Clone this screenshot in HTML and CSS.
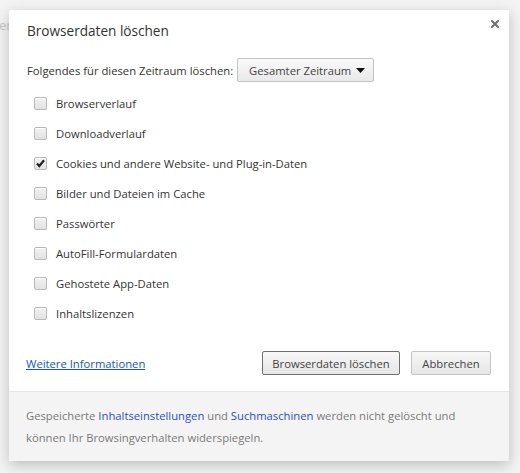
FILE: index.html
```html
<!DOCTYPE html>
<html lang="de">
<head>
<meta charset="utf-8">
<title>Browserdaten löschen</title>
<link rel="stylesheet" href="styles.css">
</head>
<body>
<div class="page-text">er</div>
<div class="dialog">
  <div class="main">
    <div class="head">
      <h1 class="title">Browserdaten löschen</h1>
      <svg class="close" width="8" height="8" viewBox="0 0 8 8"><path d="M1 1L7 7M7 1L1 7" stroke="#6f6f6f" stroke-width="2" stroke-linecap="square"/></svg>
    </div>
    <div class="range">
      <span class="range-label">Folgendes für diesen Zeitraum löschen:</span>
      <div class="select"><span>Gesamter Zeitraum</span><svg class="arrow" width="9" height="5" viewBox="0 0 9 5"><path d="M0 0H9L4.5 5Z" fill="#111"/></svg></div>
    </div>
    <ul class="options">
      <li class="opt"><span class="box"></span>Browserverlauf</li>
      <li class="opt"><span class="box"></span>Downloadverlauf</li>
      <li class="opt"><span class="box"><svg width="11" height="11" viewBox="0 0 11 11"><path d="M2 5.5L4.3 8L9 2.2" fill="none" stroke="#222" stroke-width="2.2"/></svg></span>Cookies und andere Website- und Plug-in-Daten</li>
      <li class="opt"><span class="box"></span>Bilder und Dateien im Cache</li>
      <li class="opt"><span class="box"></span>Passwörter</li>
      <li class="opt"><span class="box"></span>AutoFill-Formulardaten</li>
      <li class="opt"><span class="box"></span>Gehostete App-Daten</li>
      <li class="opt"><span class="box"></span>Inhaltslizenzen</li>
    </ul>
    <div class="actions">
      <a class="more" href="#">Weitere Informationen</a>
      <div class="buttons">
        <button class="btn btn-default">Browserdaten löschen</button>
        <button class="btn btn-cancel">Abbrechen</button>
      </div>
    </div>
  </div>
  <div class="footer">
    Gespeicherte <a href="#">Inhaltseinstellungen</a> und <a href="#">Suchmaschinen</a> werden nicht gelöscht und<br>können Ihr Browsingverhalten widerspiegeln.
  </div>
</div>
</body>
</html>
```
FILE: styles.css
```css
html, body {
  margin: 0;
  padding: 0;
}
body {
  width: 520px;
  height: 473px;
  background: #f3f3f3;
  font-family: "Open Sans", "Noto Sans", sans-serif;
  font-size: 11.25px;
  color: #333;
  position: relative;
  overflow: hidden;
}
.page-text {
  position: absolute;
  left: -1px;
  top: 16px;
  font-size: 13px;
  color: #c8c8c8;
}
.dialog {
  position: absolute;
  left: 9px;
  top: 10px;
  width: 500px;
  height: 451px;
  background: #fff;
  border-radius: 2px;
  box-shadow: 0 4px 14px rgba(0,0,0,0.22);
  display: flex;
  flex-direction: column;
  overflow: hidden;
}
.main {
  flex: 1;
  padding: 11px 18px 0 18px;
}
.head {
  display: flex;
  justify-content: space-between;
  align-items: flex-start;
}
.title {
  margin: 0;
  font-size: 13.6px;
  font-weight: normal;
  line-height: 20px;
  color: #333;
}
.close {
  margin-top: -1px;
  margin-right: -8px;
}
.range {
  margin-top: 17px;
  display: flex;
  align-items: center;
  gap: 4px;
  height: 24px;
  white-space: nowrap;
}
.select {
  box-sizing: border-box;
  width: 137px;
  height: 24px;
  border: 1px solid #c3c3c3;
  border-radius: 2px;
  background: linear-gradient(#f9f9f9, #e9e9e9);
  display: flex;
  align-items: center;
  justify-content: space-between;
  padding: 0 8px 0 11px;
  color: #444;
}
.arrow {
  display: block;
}
.options {
  list-style: none;
  margin: 6px 0 0 0;
  padding: 0 0 0 7px;
}
.opt {
  height: 30px;
  display: flex;
  align-items: center;
  gap: 9px;
}
.box {
  box-sizing: border-box;
  width: 13px;
  height: 13px;
  border: 1px solid #b8b8b8;
  border-radius: 2px;
  background: linear-gradient(#f2f2f2, #e2e2e2);
  box-shadow: inset 0 1px 0 #fff;
  display: flex;
  align-items: center;
  justify-content: center;
}
.box svg {
  display: block;
}
.actions {
  margin-top: 23px;
  display: flex;
  justify-content: space-between;
  align-items: center;
  height: 24px;
}
.more {
  color: #1155cc;
  margin-left: -1px;
}
.buttons {
  display: flex;
  gap: 11px;
}
.btn {
  box-sizing: border-box;
  height: 24px;
  padding: 0;
  border: 1px solid #c4c4c4;
  border-radius: 2px;
  background: linear-gradient(#f7f7f7, #e6e6e6);
  font-family: inherit;
  font-size: 11.25px;
  color: #444;
  white-space: nowrap;
}
.btn-default {
  border-color: #707070;
  width: 138px;
}
.btn-cancel {
  width: 80px;
}
.footer {
  height: 70px;
  box-sizing: border-box;
  border-top: 1px solid #e6e6e6;
  background: #f4f4f4;
  padding: 13px 17px 0 17px;
  line-height: 22px;
  color: #7a7a7a;
}
.footer a {
  color: #2a4fd0;
  text-decoration: none;
}
```
